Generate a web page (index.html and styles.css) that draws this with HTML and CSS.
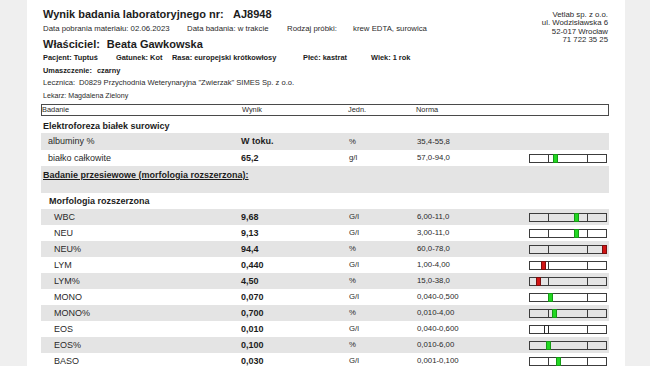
FILE: index.html
```html
<!DOCTYPE html>
<html lang="pl">
<head>
<meta charset="utf-8">
<title>Wynik badania laboratoryjnego</title>
<link rel="stylesheet" href="styles.css">
</head>
<body>
<div class="page">
  <header class="head">
    <div class="head-main">
      <div class="title"><span class="title-label">Wynik badania laboratoryjnego nr:</span><span>AJ8948</span></div>
      <div class="dates">
        <span>Data pobrania materiału: 02.06.2023</span>
        <span>Data badania: w trakcie</span>
        <span>Rodzaj próbki:</span>
        <span>krew EDTA, surowica</span>
      </div>
      <div class="owner">Właściciel:<span class="val">Beata Gawkowska</span></div>
      <div class="patient">
        <span>Pacjent: Tuptuś</span>
        <span>Gatunek: Kot</span>
        <span>Rasa: europejski krótkowłosy</span>
        <span>Płeć: kastrat</span>
        <span>Wiek: 1 rok</span>
      </div>
      <div class="line bold">Umaszczenie:<span class="val">czarny</span></div>
      <div class="line clinic">Lecznica:<span class="val">D0829 Przychodnia Weterynaryjna "Zwierzak" SIMES Sp. z o.o.</span></div>
      <div class="line doctor">Lekarz: Magdalena Zielony</div>
    </div>
    <address class="lab">Vetlab sp. z o.o.<br>ul. Wodzisławska 6<br>52-017 Wrocław<br>71 722 35 25</address>
  </header>

  <div class="results">
    <div class="thead">
      <span>Badanie</span><span>Wynik</span><span>Jedn.</span><span>Norma</span>
    </div>

    <div class="group-title">Elektroforeza białek surowicy</div>
    <div class="row shade tall"><span class="name">albuminy %</span><span class="val">W toku.</span><span>%</span><span>35,4-55,8</span><span></span></div>
    <div class="row"><span class="name">białko całkowite</span><span class="val">65,2</span><span>g/l</span><span>57,0-94,0</span>
      <span class="bar"><i></i><i></i><i></i><b class="mk ok" style="left:23px"></b></span></div>

    <div class="screen shade"><span>Badanie przesiewowe (morfologia rozszerzona):</span></div>
    <div class="sub-title">Morfologia rozszerzona</div>

    <div class="row shade"><span class="name sub">WBC</span><span class="val">9,68</span><span>G/l</span><span>6,00-11,0</span>
      <span class="bar"><i></i><i></i><i></i><b class="mk ok" style="left:44px"></b></span></div>
    <div class="row"><span class="name sub">NEU</span><span class="val">9,13</span><span>G/l</span><span>3,00-11,0</span>
      <span class="bar"><i></i><i></i><i></i><b class="mk ok" style="left:44px"></b></span></div>
    <div class="row shade"><span class="name sub">NEU%</span><span class="val">94,4</span><span>%</span><span>60,0-78,0</span>
      <span class="bar"><i></i><i></i><i></i><b class="mk bad" style="left:72px"></b></span></div>
    <div class="row"><span class="name sub">LYM</span><span class="val">0,440</span><span>G/l</span><span>1,00-4,00</span>
      <span class="bar"><i></i><i></i><i></i><b class="mk bad" style="left:11px"></b></span></div>
    <div class="row shade"><span class="name sub">LYM%</span><span class="val">4,50</span><span>%</span><span>15,0-38,0</span>
      <span class="bar"><i></i><i></i><i></i><b class="mk bad" style="left:6px"></b></span></div>
    <div class="row"><span class="name sub">MONO</span><span class="val">0,070</span><span>G/l</span><span>0,040-0,500</span>
      <span class="bar"><i></i><i></i><i></i><b class="mk ok" style="left:18px"></b></span></div>
    <div class="row shade"><span class="name sub">MONO%</span><span class="val">0,700</span><span>%</span><span>0,010-4,00</span>
      <span class="bar"><i></i><i></i><i></i><b class="mk ok" style="left:22px"></b></span></div>
    <div class="row"><span class="name sub">EOS</span><span class="val">0,010</span><span>G/l</span><span>0,040-0,600</span>
      <span class="bar"><i></i><i></i><i></i><b class="mk low" style="left:14px"></b></span></div>
    <div class="row shade"><span class="name sub">EOS%</span><span class="val">0,100</span><span>%</span><span>0,010-6,00</span>
      <span class="bar"><i></i><i></i><i></i><b class="mk ok" style="left:16px"></b></span></div>
    <div class="row"><span class="name sub">BASO</span><span class="val">0,030</span><span>G/l</span><span>0,001-0,100</span>
      <span class="bar"><i></i><i></i><i></i><b class="mk ok" style="left:26px"></b></span></div>
  </div>
</div>
</body>
</html>
```

FILE: styles.css
```css
* { box-sizing: border-box; }

html, body {
  margin: 0;
  padding: 0;
  background: #efefef;
}

body {
  font-family: "Liberation Sans", Arial, sans-serif;
  color: #1c1c1c;
  height: 366px;
  overflow: hidden;
}

.page {
  margin-left: 27px;
  width: 598px;
  min-height: 366px;
  background: #ffffff;
  padding: 6px 16px 0 14px;
}

/* ---------- header ---------- */
.head {
  display: flex;
  justify-content: space-between;
  align-items: flex-start;
}

.head-main {
  padding-left: 2px;
  flex: 1;
}

.title {
  font-size: 11px;
  font-weight: bold;
  line-height: 16px;
  display: flex;
  white-space: nowrap;
}

.title-label { width: 190px; }

.dates {
  display: grid;
  grid-template-columns: 144px 100px 66px auto;
  font-size: 7.8px;
  line-height: 14px;
  color: #2a2a2a;
  white-space: nowrap;
}

.owner {
  font-size: 11px;
  font-weight: bold;
  line-height: 16px;
  white-space: nowrap;
}

.owner .val { margin-left: 7px; }

.patient {
  display: grid;
  grid-template-columns: 73px 56px 131px 68px auto;
  font-size: 7.4px;
  font-weight: bold;
  line-height: 12.5px;
  white-space: nowrap;
}

.line {
  font-size: 7.6px;
  line-height: 12.5px;
  color: #2a2a2a;
  white-space: nowrap;
}

.line.bold { font-weight: bold; font-size: 7.4px; color: #1c1c1c; }
.line.bold .val { margin-left: 5px; }
.line.doctor { font-size: 7.1px; }

.line .val { margin-left: 4px; }

.lab {
  font-style: normal;
  font-size: 7.8px;
  line-height: 8.6px;
  text-align: right;
  margin: 4.5px 1px 0 0;
  color: #2a2a2a;
}

/* ---------- results table ---------- */
.results {
  margin-top: 2px;
  width: 568px;
}

.thead {
  display: grid;
  grid-template-columns: 200px 106px 68px auto;
  height: 12px;
  border: 1px solid #4a4a4a;
  font-size: 7.4px;
  line-height: 10px;
  color: #2a2a2a;
}

.group-title {
  height: 17px;
  padding: 3px 0 0 2px;
  line-height: 14px;
  font-size: 9px;
  font-weight: bold;
}

.row {
  display: grid;
  grid-template-columns: 200px 108px 68px 112px 78px 2px;
  align-items: center;
  height: 16px;
  font-size: 7.8px;
  line-height: 16px;
  color: #2a2a2a;
}

.row.tall { height: 17px; line-height: 17px; }

.shade { background: #e4e4e4; }

.name { padding-left: 7px; font-size: 9px; }
.name.sub { padding-left: 13px; }

.row .val {
  font-weight: bold;
  color: #1c1c1c;
  font-size: 9px;
}

.screen {
  height: 27px;
  padding: 1px 0 0 2px;
  line-height: 16px;
  font-size: 9px;
  font-weight: bold;
}

.screen span {
  text-decoration: underline;
}

.sub-title {
  height: 16px;
  line-height: 16px;
  padding-left: 8px;
  font-size: 9px;
  font-weight: bold;
}

/* ---------- range bar ---------- */
.bar {
  position: relative;
  display: grid;
  grid-template-columns: 19px 39px 1fr;
  width: 78px;
  height: 9px;
  border: 1px solid #3c3c3c;
}

.bar i { display: block; }
.bar i:nth-child(1), .bar i:nth-child(2) { border-right: 1px solid #3c3c3c; }

.mk {
  position: absolute;
  top: -1px;
  width: 5px;
  height: 9px;
  border: 1px solid;
}

.mk.ok { background: #22d822; border-color: #169a16; }
.mk.bad { background: #d21414; border-color: #7a1010; }
.mk.low { background: #ffffff; border-color: #2a2a2a; }
```
